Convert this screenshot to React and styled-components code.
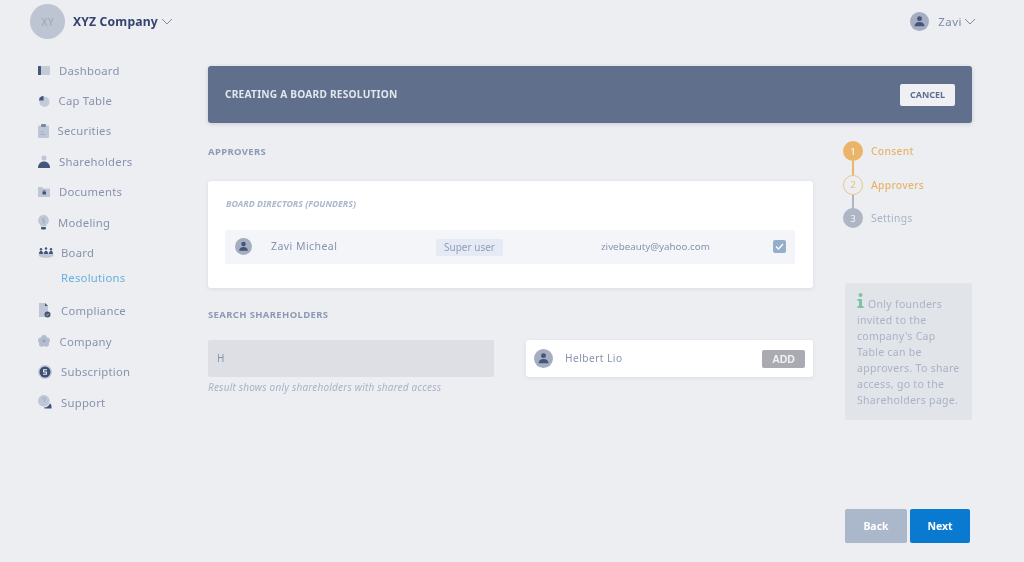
import React from "react";
import styled, { createGlobalStyle } from "styled-components";

const GlobalStyle = createGlobalStyle`
  html, body {
    margin: 0;
    padding: 0;
    background: #eceef2;
  }
  * {
    box-sizing: border-box;
  }
  body {
    font-family: "Noto Sans", "Liberation Sans", sans-serif;
    color: #8793ad;
  }
`;

const Page = styled.div`
  width: 1024px;
  height: 562px;
  overflow: hidden;
  background: #eceef2;
  display: flex;
  flex-direction: column;
  filter: blur(0.35px);
`;

const Header = styled.header`
  height: 43px;
  flex: none;
  display: flex;
  justify-content: space-between;
  padding: 4px 48px 0 30px;
`;

const HeaderGroup = styled.div`
  display: flex;
  align-items: center;
  height: 35px;
`;

const CompanyAvatar = styled.div`
  width: 35px;
  height: 35px;
  border-radius: 50%;
  background: #bdc5d2;
  color: #a4adbd;
  font-size: 10px;
  font-weight: 600;
  display: flex;
  align-items: center;
  justify-content: center;
  margin-right: 8px;
`;

const CompanyName = styled.span`
  font-size: 12.2px;
  font-weight: 700;
  letter-spacing: 0.15px;
  color: #34446c;
  margin-right: 3px;
`;

const UserName = styled.span`
  font-size: 11.5px;
  letter-spacing: 0.5px;
  color: #7e8aa6;
  margin: 0 2px 0 9px;
`;

const Body = styled.div`
  flex: 1;
  display: flex;
`;

const Sidebar = styled.nav`
  width: 208px;
  flex: none;
  padding: 12px 0 0 38px;
`;

const NavItem = styled.div`
  height: 30.4px;
  display: flex;
  align-items: center;
  font-size: 11.3px;
  letter-spacing: 0.25px;
  color: #8793ad;
`;

const NavIcon = styled.span`
  width: ${(props) => props.$width}px;
  flex: none;
  display: flex;
  align-items: center;
`;

const SubItem = styled.div`
  height: 20px;
  margin: 0 0 8px 23px;
  display: flex;
  align-items: center;
  font-size: 11.3px;
  letter-spacing: 0.25px;
  color: #6aaedd;
`;

const Main = styled.main`
  width: 764px;
  flex: none;
  padding-top: 23px;
`;

const Banner = styled.div`
  height: 57px;
  background: #5f6f8c;
  border-radius: 3px;
  box-shadow: 0 1px 4px rgba(60, 70, 100, 0.2);
  display: flex;
  align-items: center;
  justify-content: space-between;
  padding: 0 17px;
  margin-bottom: 19px;
`;

const BannerTitle = styled.h1`
  margin: 0 0 2px;
  font-size: 10.2px;
  font-weight: 700;
  letter-spacing: 0.2px;
  color: #e3e6ec;
`;

const CancelButton = styled.button`
  width: 55px;
  height: 22px;
  border: 0;
  padding: 0;
  border-radius: 2px;
  background: #eef0f4;
  color: #5f6f8c;
  font-family: inherit;
  font-size: 9px;
  font-weight: 700;
`;

const Columns = styled.div`
  display: flex;
  height: 402px;
`;

const Content = styled.div`
  width: 605px;
  flex: none;
  padding-top: 3px;
`;

const SectionLabel = styled.h2`
  margin: 0;
  height: 14px;
  line-height: 14px;
  font-size: 9.5px;
  font-weight: 700;
  letter-spacing: 0.35px;
  color: #8e9ab4;
`;

const Card = styled.section`
  height: 107px;
  margin: 22px 0 20px;
  background: #fff;
  border-radius: 3px;
  box-shadow: 0 1px 4px rgba(80, 90, 120, 0.12);
  padding: 17px 18px 0 17px;
`;

const CardLabel = styled.h3`
  margin: 0 0 19px 1px;
  height: 13px;
  line-height: 13px;
  font-size: 8.8px;
  font-style: italic;
  font-weight: 700;
  color: #aab7cc;
`;

const DirectorRow = styled.div`
  height: 34px;
  background: #f4f5f8;
  border-radius: 2px;
  display: flex;
  align-items: center;
  padding: 0 9px 2px 10px;
  font-size: 10.5px;
  color: #8793ad;
`;

const DirectorName = styled.span`
  width: 165px;
  margin-left: 19px;
  letter-spacing: 0.45px;
`;

const RoleBadge = styled.span`
  width: 67px;
  height: 17px;
  margin-top: 2px;
  border-radius: 2px;
  background: #e6eaf4;
  font-size: 10px;
  display: flex;
  align-items: center;
  justify-content: center;
  color: #8f9db8;
`;

const Email = styled.span`
  margin-left: 98px;
  flex: 1;
  font-size: 9.8px;
`;

const CheckBox = styled.span`
  width: 13px;
  height: 13px;
  border-radius: 2px;
  background: #95aec9;
  display: flex;
  align-items: center;
  justify-content: center;
`;

const SearchGrid = styled.div`
  display: grid;
  grid-template-columns: 286px 287px;
  column-gap: 32px;
  margin-top: 18px;
`;

const SearchInput = styled.input`
  width: 100%;
  height: 37px;
  border: 0;
  outline: 0;
  border-radius: 2px;
  background: #dddfe4;
  padding: 0 9px 2px;
  font-family: inherit;
  font-size: 10px;
  color: #8793ad;
`;

const HelperText = styled.p`
  margin: 3px 0 0;
  font-size: 10px;
  font-style: italic;
  letter-spacing: 0.2px;
  color: #a9b3c6;
`;

const ResultCard = styled.div`
  height: 37px;
  background: #fff;
  border-radius: 3px;
  box-shadow: 0 1px 4px rgba(80, 90, 120, 0.12);
  display: flex;
  align-items: center;
  padding: 0 8px;
`;

const ResultName = styled.span`
  flex: 1;
  margin: 0 0 2px 12px;
  font-size: 10.2px;
  letter-spacing: 0.45px;
  color: #8793ad;
`;

const AddButton = styled.button`
  width: 43px;
  height: 18px;
  border: 0;
  padding: 0;
  border-radius: 2px;
  background: #aaaab2;
  color: #f2f2f4;
  font-family: "Liberation Sans", sans-serif;
  font-size: 10.5px;
  font-weight: 700;
`;

const Rail = styled.aside`
  width: 129px;
  margin: -1px 0 0 30px;
  flex: none;
  display: flex;
  flex-direction: column;
`;

const Steps = styled.ol`
  list-style: none;
  margin: 0 0 41.5px;
  padding: 0;
  flex: none;
`;

const Step = styled.li`
  position: relative;
  height: 33.5px;
  display: flex;
  align-items: flex-start;
  font-size: 10.3px;
  font-weight: ${(props) => (props.$state === "pending" ? 400 : 500)};
  letter-spacing: 0.3px;
  color: ${(props) => (props.$state === "pending" ? "#a9b3c6" : "#e9b36c")};
`;

const StepDot = styled.span`
  width: 20px;
  height: 20px;
  flex: none;
  border-radius: 50%;
  display: flex;
  align-items: center;
  justify-content: center;
  font-size: 9.5px;
  margin-right: 8px;
  background: ${(props) =>
    props.$state === "done"
      ? "#ecb469"
      : props.$state === "pending"
        ? "#aeb6c5"
        : "transparent"};
  border: ${(props) =>
    props.$state === "current" ? "1px solid #ecc48e" : "none"};
  color: ${(props) => (props.$state === "current" ? "#e9c08a" : "#f3f4f6")};
`;

const StepLine = styled.span`
  position: absolute;
  left: 9px;
  top: 20px;
  width: 2px;
  height: 14px;
  background: ${(props) => props.$color};
`;

const StepText = styled.span`
  line-height: 20px;
`;

const InfoBox = styled.div`
  width: 127px;
  height: 137px;
  flex: none;
  margin-left: 2px;
  border-radius: 2px;
  background: #e1e4e9;
  padding: 10px 12px 0 12px;
  font-size: 10.5px;
  letter-spacing: 0.3px;
  line-height: 16px;
  color: #a9b3c6;
`;

const Actions = styled.div`
  display: flex;
  gap: 3px;
  margin: 89px 0 0 2px;
`;

const ActionButton = styled.button`
  width: ${(props) => (props.$primary ? 60 : 62)}px;
  height: 34px;
  border: 0;
  padding: 0;
  border-radius: 2px;
  background: ${(props) => (props.$primary ? "#0a7ad1" : "#abb8cb")};
  color: #fff;
  font-family: inherit;
  font-size: 10.5px;
  font-weight: 700;
`;

const InfoIcon = styled.svg`
  margin-right: 4px;
`;

const Chevron = () => (
  <svg width="12" height="7" viewBox="0 0 12 7" fill="none">
    <path d="M1 1l5 5 5-5" stroke="#7e8aa6" strokeWidth="1" />
  </svg>
);

const PersonAvatar = ({ size }) => (
  <svg width={size} height={size} viewBox="0 0 20 20">
    <circle cx="10" cy="10" r="10" fill="#a4aec0" />
    <circle cx="10" cy="7" r="2.6" fill="#44557a" />
    <path d="M4.8 15c0-3 2.3-4.5 5.2-4.5s5.2 1.500 5.200 4.500z" fill="#44557a" />
  </svg>
);

const icons = {
  dashboard: (
    <svg width="12" height="9" viewBox="0 0 12 9">
      <rect x="3" width="9" height="9" fill="#c3cad8" />
      <rect width="3" height="9" rx="0.5" fill="#44557a" />
    </svg>
  ),
  capTable: (
    <svg width="12" height="12" viewBox="0 0 13 13">
      <circle cx="7" cy="7.500" r="5.500" fill="#c3cad8" />
      <path d="M6 6V1A5 5 0 0 0 1 6z" fill="#44557a" />
    </svg>
  ),
  securities: (
    <svg width="11" height="14" viewBox="0 0 11 14">
      <rect y="1.500" width="11" height="12.500" rx="1" fill="#bfc7d6" />
      <rect x="3" width="5" height="3" rx="1" fill="#7a88a5" />
      <path d="M2.500 8h3M2.500 10.500h5" stroke="#98a4ba" strokeWidth="0.8" />
    </svg>
  ),
  shareholders: (
    <svg width="12" height="13" viewBox="0 0 12 13">
      <circle cx="6" cy="3" r="2.500" fill="#bfc7d6" />
      <path d="M0 13c0-4 2.500-6.500 6-6.500s6 2.500 6 6.500z" fill="#44557a" />
    </svg>
  ),
  documents: (
    <svg width="12" height="11" viewBox="0 0 12 11">
      <path d="M0 1h4l1.200 1.500H12V11H0z" fill="#bfc7d6" />
      <rect x="4.500" y="5.500" width="3.500" height="3" fill="#44557a" />
      <path d="M5.200 5.500a1 1 0 0 1 2.100 0" fill="none" stroke="#44557a" strokeWidth="0.7" />
    </svg>
  ),
  modeling: (
    <svg width="11" height="15" viewBox="0 0 11 15">
      <path d="M5.500 0a5.500 5.500 0 0 1 3 10v1.500h-6V10a5.500 5.500 0 0 1 3-10z" fill="#bfc7d6" />
      <rect x="3" y="12" width="5" height="2.500" rx="1" fill="#44557a" />
      <path d="M6.800 3.800H4.600v2h1.800v2H4.200" fill="none" stroke="#98a4ba" strokeWidth="0.8" />
    </svg>
  ),
  board: (
    <svg width="16" height="11" viewBox="0 0 16 11">
      <ellipse cx="8" cy="8" rx="7.500" ry="3" fill="#bfc7d6" />
      <circle cx="3" cy="2.200" r="1.200" fill="#44557a" />
      <circle cx="8" cy="1.500" r="1.200" fill="#44557a" />
      <circle cx="13" cy="2.200" r="1.200" fill="#44557a" />
      <path d="M1 7c0-2 1-3.200 2-3.200S5 5 5 7zM6 7c0-2 1-3.200 2-3.200S10 5 10 7zM11 7c0-2 1-3.200 2-3.200S15 5 15 7z" fill="#44557a" />
    </svg>
  ),
  compliance: (
    <svg width="13" height="15" viewBox="0 0 13 15">
      <path d="M1 0h6l3 3v11H1z" fill="#bfc7d6" />
      <path d="M7 0v3h3z" fill="#44557a" />
      <circle cx="9.500" cy="11.500" r="3" fill="#44557a" />
      <path d="M8.200 11.500l1 1 1.600-1.800" fill="none" stroke="#e8ebf0" strokeWidth="0.7" />
    </svg>
  ),
  company: (
    <svg width="12" height="12" viewBox="0 0 12 12">
      <circle cx="6" cy="2.800" r="2.800" fill="#b4bccd" />
      <circle cx="2.800" cy="5.200" r="2.800" fill="#b4bccd" />
      <circle cx="9.200" cy="5.200" r="2.800" fill="#b4bccd" />
      <circle cx="3.800" cy="9" r="2.800" fill="#b4bccd" />
      <circle cx="8.200" cy="9" r="2.800" fill="#b4bccd" />
      <circle cx="6" cy="6" r="1.600" fill="#98a4ba" />
    </svg>
  ),
  subscription: (
    <svg width="14" height="14" viewBox="0 0 14 14">
      <circle cx="7" cy="7" r="7" fill="#c3cad8" />
      <circle cx="7" cy="7" r="5.500" fill="#3d4e75" />
      <path d="M9 4.800H5.600v2.200h2.800v2.200H5" fill="none" stroke="#eef0f4" strokeWidth="1.100" />
    </svg>
  ),
  support: (
    <svg width="14" height="14" viewBox="0 0 14 14">
      <circle cx="5.800" cy="5.800" r="5.800" fill="#bfc7d6" />
      <path d="M13.500 13.500H7.800c-1.300 0-2-.4-1.700-1 3 0 5-1.700 5.800-4.200 1.300 1 1.600 2.500 1.600 3.200z" fill="#44557a" />
      <path d="M4.200 4.300a1.600 1.600 0 1 1 2.200 1.500v1.200" fill="none" stroke="#98a4ba" strokeWidth="0.8" />
    </svg>
  ),
};

const navItems = [
  { label: "Dashboard", icon: "dashboard", width: 21 },
  { label: "Cap Table", icon: "capTable", width: 20.500 },
  { label: "Securities", icon: "securities", width: 19.500 },
  { label: "Shareholders", icon: "shareholders", width: 21 },
  { label: "Documents", icon: "documents", width: 21 },
  { label: "Modeling", icon: "modeling", width: 20 },
  { label: "Board", icon: "board", width: 23 },
];

const lowerNavItems = [
  { label: "Compliance", icon: "compliance", width: 23 },
  { label: "Company", icon: "company", width: 21.500 },
  { label: "Subscription", icon: "subscription", width: 23 },
  { label: "Support", icon: "support", width: 23 },
];

const NavRow = ({ item }) => (
  <NavItem>
    <NavIcon $width={item.width}>{icons[item.icon]}</NavIcon>
    {item.label}
  </NavItem>
);

const App = () => {
  return (
    <Page>
      <GlobalStyle />
      <Header>
        <HeaderGroup>
          <CompanyAvatar>XY</CompanyAvatar>
          <CompanyName>XYZ Company</CompanyName>
          <Chevron />
        </HeaderGroup>
        <HeaderGroup>
          <PersonAvatar size={19} />
          <UserName>Zavi</UserName>
          <Chevron />
        </HeaderGroup>
      </Header>
      <Body>
        <Sidebar>
          {navItems.map((item) => (
            <NavRow key={item.label} item={item} />
          ))}
          <SubItem>Resolutions</SubItem>
          {lowerNavItems.map((item) => (
            <NavRow key={item.label} item={item} />
          ))}
        </Sidebar>
        <Main>
          <Banner>
            <BannerTitle>CREATING A BOARD RESOLUTION</BannerTitle>
            <CancelButton>CANCEL</CancelButton>
          </Banner>
          <Columns>
            <Content>
              <SectionLabel>APPROVERS</SectionLabel>
              <Card>
                <CardLabel>BOARD DIRECTORS (FOUNDERS)</CardLabel>
                <DirectorRow>
                  <PersonAvatar size={17} />
                  <DirectorName>Zavi Micheal</DirectorName>
                  <RoleBadge>Super user</RoleBadge>
                  <Email>zivebeauty@yahoo.com</Email>
                  <CheckBox>
                    <svg width="9" height="7" viewBox="0 0 9 7" fill="none">
                      <path d="M1 3.500l2.500 2.500L8 1" stroke="#fff" strokeWidth="1.300" />
                    </svg>
                  </CheckBox>
                </DirectorRow>
              </Card>
              <SectionLabel>SEARCH SHAREHOLDERS</SectionLabel>
              <SearchGrid>
                <div>
                  <SearchInput defaultValue="H" />
                  <HelperText>Result shows only shareholders with shared access</HelperText>
                </div>
                <ResultCard>
                  <PersonAvatar size={19} />
                  <ResultName>Helbert Lio</ResultName>
                  <AddButton>ADD</AddButton>
                </ResultCard>
              </SearchGrid>
            </Content>
            <Rail>
              <Steps>
                <Step $state="done">
                  <StepDot $state="done">1</StepDot>
                  <StepLine $color="#ecb469" />
                  <StepText>Consent</StepText>
                </Step>
                <Step $state="current">
                  <StepDot $state="current">2</StepDot>
                  <StepLine $color="#aeb6c5" />
                  <StepText>Approvers</StepText>
                </Step>
                <Step $state="pending">
                  <StepDot $state="pending">3</StepDot>
                  <StepText>Settings</StepText>
                </Step>
              </Steps>
              <InfoBox>
                <InfoIcon width="7" height="15" viewBox="0 0 7 15">
                  <circle cx="3.500" cy="2" r="2" fill="#7cc4a8" />
                  <path d="M.5 6h4.500v7h1.500v2H.5v-2h1.500V8H.5z" fill="#7cc4a8" />
                </InfoIcon>
                Only founders invited to the company's Cap Table can be approvers. To share access, go to the Shareholders page.
              </InfoBox>
              <Actions>
                <ActionButton>Back</ActionButton>
                <ActionButton $primary>Next</ActionButton>
              </Actions>
            </Rail>
          </Columns>
        </Main>
      </Body>
    </Page>
  );
};

export default App;
